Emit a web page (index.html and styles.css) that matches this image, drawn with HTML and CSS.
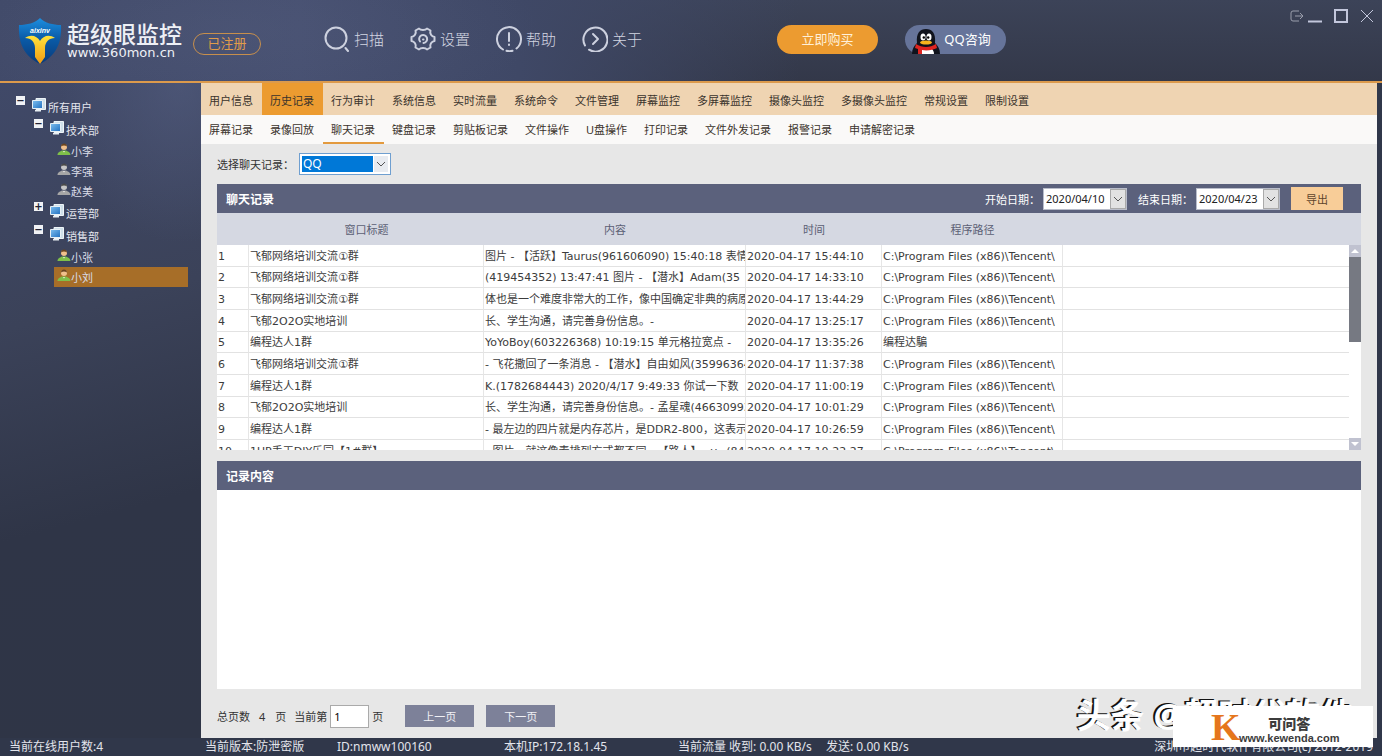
FILE: index.html
```html
<!DOCTYPE html>
<html lang="zh-CN">
<head>
<meta charset="utf-8">
<title>超级眼监控</title>
<link rel="stylesheet" href="styles.css">
</head>
<body>
<svg class="defs" width="0" height="0" aria-hidden="true">
  <defs>
    <linearGradient id="blue" x1="0" y1="0" x2="0" y2="1"><stop offset="0" stop-color="#1d8fe0"/><stop offset="0.45" stop-color="#0a5ba8"/><stop offset="1" stop-color="#0a3a78"/></linearGradient>
    <linearGradient id="gold" x1="0" y1="0" x2="0" y2="1"><stop offset="0" stop-color="#ffe23c"/><stop offset="1" stop-color="#f09a12"/></linearGradient>
    <linearGradient id="screen" x1="0" y1="0" x2="1" y2="1"><stop offset="0" stop-color="#7fc0f0"/><stop offset="1" stop-color="#1f6fc0"/></linearGradient>
    <symbol id="pc" viewBox="0 0 14 14">
      <path d="M4 .5h9.500v11H4z" fill="#cfe0ea" stroke="#eef4f7"/>
      <path d="M.5 2.500h10v8H.5z" fill="url(#screen)" stroke="#e6f0f6"/>
      <path d="M3 12h6v1.500H3z" fill="#e8eef2"/>
    </symbol>
    <symbol id="person" viewBox="0 0 14 13">
      <path d="M.5 12c0-3 3-3.500 4.500-4.500h4c1.500 1 4.500 1.500 4.500 4.500z" fill="currentColor"/>
      <circle cx="7" cy="4" r="3" class="face"/>
      <path d="M4 3.500c0-4 6-4 6 0-2-1.500-4-1.500-6 0z" class="hair"/>
      <path d="M6 8 7 9.500 8 8z" fill="#f2f2ea"/>
    </symbol>
  </defs>
</svg>
<div class="app">
  <header class="top">
    <div class="brand">
      <svg class="shield" viewBox="0 0 44 46" aria-hidden="true">
        <path d="M22 0c5 5 13 7 21 7 1 18-5 31-21 39C6 38 0 25 1 7c8 0 16-2 21-7z" fill="url(#blue)"/>
        <path d="M7 20c6-4 12-2 15 3 3-5 9-7 15-3-6 0-10 4-10 10v9l-5 7-5-7v-9c0-6-4-10-10-10z" fill="url(#gold)"/>
        <text x="22" y="15" text-anchor="middle" class="shield-text">aixinv</text>
      </svg>
      <div class="brand-text">
        <h1>超级眼监控</h1>
        <p>www.360mon.cn</p>
      </div>
      <span class="badge">已注册</span>
    </div>
    <nav class="actions">
      <button class="action"><svg viewBox="0 0 26 26"><circle cx="12" cy="12" r="10.500"/><path d="m21.500 22 2.500 3"/></svg>扫描</button>
      <button class="action"><svg viewBox="0 0 26 26"><path d="M9 2.500c1.500 2 6.500 2 8 0l3.500 2c-1 3 1 6 4 6.500v4c-3 .5-5 3.500-4 6.500l-3.500 2c-1.500-2-6.500-2-8 0l-3.500-2c1-3-1-6-4-6.500v-4c3-.5 5-3.500 4-6.500z"/><path d="M10 15.500a4 4 0 1 1 3.500 1.500"/><path d="M13 13.500h.500"/></svg>设置</button>
      <button class="action"><svg viewBox="0 0 26 26"><path d="M20.500 22.500A12 12 0 1 0 7 23.500"/><path d="M10.500 24.800a12 12 0 0 0 6 0"/><path d="M13 7v8M13 18.500v.5"/></svg>帮助</button>
      <button class="action"><svg viewBox="0 0 26 26"><path d="M3 19.500a12 12 0 1 1 4 4.200"/><path d="m11 8 5 5-5 5"/></svg>关于</button>
    </nav>
    <div class="promo">
      <button class="pill buy">立即购买</button>
      <button class="pill qq">
        <svg viewBox="0 0 30 26" aria-hidden="true">
          <path d="M1 26c0-5 2-8 5-11C5 5 9 1 15 1s10 4 9 14c3 3 5 6 5 11z" fill="#10131c"/>
          <path d="M7 26c0-4 3-7 8-7s8 3 8 7z" fill="#fff"/>
          <ellipse cx="12" cy="9" rx="2.500" ry="3.500" fill="#fff"/><ellipse cx="18" cy="9" rx="2.500" ry="3.500" fill="#fff"/>
          <circle cx="12.800" cy="9.500" r="1.200"/><circle cx="17.200" cy="9.500" r="1.200"/>
          <ellipse cx="15" cy="14.500" rx="6" ry="2" fill="#f8b41c"/>
          <path d="M5 16c6 4 14 4 20 0l1 4c-4 2-10 3-15 2v4H7v-5l-3-1z" fill="#e02420"/>
        </svg>QQ咨询</button>
    </div>
    <div class="window-buttons">
      <button aria-label="退出"><svg viewBox="0 0 14 14"><path class="dim" d="M9 2H3a2 2 0 0 0-2 2v6a2 2 0 0 0 2 2h6M5 7h8M10 4l3 3-3 3"/></svg></button>
      <button aria-label="最小化"><svg viewBox="0 0 14 14"><path d="M0 12.500h14"/></svg></button>
      <button aria-label="最大化"><svg viewBox="0 0 14 14"><path d="M1 1h12v12H1z"/></svg></button>
      <button aria-label="关闭"><svg viewBox="0 0 14 14"><path d="m1 1 12 12M13 1 1 13"/></svg></button>
    </div>
  </header>

  <div class="middle">
    <aside class="side">
      <ul class="tree">
        <li class="group root"><button class="toggle" aria-label="折叠">−</button><svg><use href="#pc"/></svg>所有用户</li>
        <li class="group"><button class="toggle" aria-label="折叠">−</button><svg><use href="#pc"/></svg>技术部</li>
        <li class="leaf"><svg><use href="#person"/></svg>小李</li>
        <li class="leaf off"><svg><use href="#person"/></svg>李强</li>
        <li class="leaf off"><svg><use href="#person"/></svg>赵美</li>
        <li class="group"><button class="toggle" aria-label="展开">+</button><svg><use href="#pc"/></svg>运营部</li>
        <li class="group"><button class="toggle" aria-label="折叠">−</button><svg><use href="#pc"/></svg>销售部</li>
        <li class="leaf"><svg><use href="#person"/></svg>小张</li>
        <li class="leaf selected"><svg><use href="#person"/></svg>小刘</li>
      </ul>
    </aside>

    <main class="main">
      <nav class="tabs">
        <button>用户信息</button><button class="active">历史记录</button><button>行为审计</button><button>系统信息</button><button>实时流量</button><button>系统命令</button><button>文件管理</button><button>屏幕监控</button><button>多屏幕监控</button><button>摄像头监控</button><button>多摄像头监控</button><button>常规设置</button><button>限制设置</button>
      </nav>
      <nav class="tabs sub">
        <button>屏幕记录</button><button>录像回放</button><button class="active">聊天记录</button><button>键盘记录</button><button>剪贴板记录</button><button>文件操作</button><button>U盘操作</button><button>打印记录</button><button>文件外发记录</button><button>报警记录</button><button>申请解密记录</button>
      </nav>
      <div class="content">
        <div class="filter">
          <label for="source">选择聊天记录：</label>
          <span class="combo">
            <select id="source"><option>QQ</option></select>
            <svg viewBox="0 0 14 16" aria-hidden="true"><path d="m3 6 4 4 4-4"/></svg>
          </span>
        </div>

        <section class="panel list">
          <div class="panel-head">
            <h2>聊天记录</h2>
            <label for="from">开始日期：</label>
            <span class="date"><input id="from" value="2020/04/10"><button aria-label="选择开始日期"><svg viewBox="0 0 14 18"><path d="m3 7 4 4 4-4"/></svg></button></span>
            <label for="to" class="next">结束日期：</label>
            <span class="date"><input id="to" value="2020/04/23"><button aria-label="选择结束日期"><svg viewBox="0 0 14 18"><path d="m3 7 4 4 4-4"/></svg></button></span>
            <button class="export">导出</button>
          </div>
          <div class="grid">
            <div class="rows">
              <table>
                <colgroup><col class="c-no"><col class="c-title"><col class="c-text"><col class="c-time"><col class="c-path"><col></colgroup>
                <thead><tr><th></th><th>窗口标题</th><th>内容</th><th>时间</th><th>程序路径</th><th></th></tr></thead>
                <tbody>
                  <tr><td>1</td><td>飞郁网络培训交流①群</td><td>图片 - 【活跃】Taurus(961606090) 15:40:18 表情</td><td>2020-04-17 15:44:10</td><td>C:\Program Files (x86)\Tencent\</td><td></td></tr>
                  <tr><td>2</td><td>飞郁网络培训交流①群</td><td>(419454352) 13:47:41 图片 - 【潜水】Adam(35</td><td>2020-04-17 14:33:10</td><td>C:\Program Files (x86)\Tencent\</td><td></td></tr>
                  <tr><td>3</td><td>飞郁网络培训交流①群</td><td>体也是一个难度非常大的工作，像中国确定非典的病原体</td><td>2020-04-17 13:44:29</td><td>C:\Program Files (x86)\Tencent\</td><td></td></tr>
                  <tr><td>4</td><td>飞郁2O2O实地培训</td><td>长、学生沟通，请完善身份信息。-</td><td>2020-04-17 13:25:17</td><td>C:\Program Files (x86)\Tencent\</td><td></td></tr>
                  <tr><td>5</td><td>编程达人1群</td><td>YoYoBoy(603226368) 10:19:15 单元格拉宽点 -</td><td>2020-04-17 13:35:26</td><td>编程达騙</td><td></td></tr>
                  <tr><td>6</td><td>飞郁网络培训交流①群</td><td>- 飞花撒回了一条消息 - 【潜水】自由如风(35996364</td><td>2020-04-17 11:37:38</td><td>C:\Program Files (x86)\Tencent\</td><td></td></tr>
                  <tr><td>7</td><td>编程达人1群</td><td>K.(1782684443) 2020/4/17 9:49:33 你试一下数</td><td>2020-04-17 11:00:19</td><td>C:\Program Files (x86)\Tencent\</td><td></td></tr>
                  <tr><td>8</td><td>飞郁2O2O实地培训</td><td>长、学生沟通，请完善身份信息。- 孟星魂(46630993</td><td>2020-04-17 10:01:29</td><td>C:\Program Files (x86)\Tencent\</td><td></td></tr>
                  <tr><td>9</td><td>编程达人1群</td><td>- 最左边的四片就是内存芯片，是DDR2-800，这表示频</td><td>2020-04-17 10:26:59</td><td>C:\Program Files (x86)\Tencent\</td><td></td></tr>
                  <tr><td>10</td><td>1UP手工DIY乐园【1#群】</td><td>- 图片 - 就这像素排列方式都不同 - 【路人】=v=(84</td><td>2020-04-17 10:22:27</td><td>C:\Program Files (x86)\Tencent\</td><td></td></tr>
                </tbody>
              </table>
            </div>
            <div class="scroll">
              <button aria-label="向上"><svg viewBox="0 0 12 12"><path d="m2 8 4-4 4 4z"/></svg></button>
              <div class="thumb"></div>
              <button aria-label="向下"><svg viewBox="0 0 12 12"><path d="m2 4 4 4 4-4z"/></svg></button>
            </div>
          </div>
        </section>

        <section class="panel detail">
          <div class="panel-head"><h2>记录内容</h2></div>
          <textarea aria-label="记录内容" readonly></textarea>
        </section>

        <div class="pager">
          <span>总页数</span><span class="count">4</span><span>页</span>
          <label for="page">当前第</label><input id="page" value="1"><span class="unit">页</span>
          <button>上一页</button><button>下一页</button>
        </div>
      </div>
    </main>
  </div>

  <footer class="status">
    <span class="s-online">当前在线用户数:4</span>
    <span class="s-version">当前版本:防泄密版</span>
    <span class="s-id">ID:nmww100160</span>
    <span class="s-ip">本机IP:172.18.1.45</span>
    <span class="s-flow">当前流量 收到: 0.00 KB/s</span>
    <span>发送: 0.00 KB/s</span>
    <span class="s-copy">深圳市超时代软件有限公司(c) 2012-2019</span>
  </footer>

  <div class="watermark">头条 @超时代软件</div>
  <div class="site-mark">
    <span class="k">K</span>
    <span class="site"><b>可问答</b><span>www.kewenda.com</span></span>
  </div>
</div>
</body>
</html>
```

FILE: styles.css
```css
* { box-sizing: border-box; margin: 0; padding: 0; }
body, button, input, select, textarea {
  font-family: "Noto Sans", "Noto Sans CJK SC", sans-serif;
  font-size: 11px;
}
button { border: 0; background: none; color: inherit; white-space: nowrap; }
.defs { position: absolute; }
.app {
  position: relative;
  display: flex;
  flex-direction: column;
  height: 100vh;
  overflow: hidden;
  background: #30374a;
  color: #333;
}

/* header */
.top {
  display: flex;
  align-items: flex-start;
  flex: none;
  height: 83px;
  border-bottom: 2px solid #dc9a4c;
  background:
    radial-gradient(ellipse 300px 90px at 240px 30px, #59638244, transparent),
    linear-gradient(to right, #414a69 0, #464f70 300px, #3f4866 520px, transparent 800px),
    linear-gradient(#3c4358, #333849);
}
.brand { display: flex; width: 324px; padding: 18px 0 0 18px; }
.shield { width: 44px; height: 46px; }
.shield-text { font: italic bold 7px "Liberation Sans", sans-serif; fill: #fff; }
.brand-text { margin-left: 5px; color: #eef0f6; }
.brand-text h1 { font-size: 23px; line-height: 28px; height: 27px; padding-top: 2px; font-weight: 500; }
.brand-text p { font: 13px/16px "DejaVu Sans", sans-serif; }
.badge {
  width: 68px; height: 22px; margin: 15px 0 0 11px;
  border: 1px solid #c78f4c; border-radius: 11px;
  color: #e09c4a; font-size: 13px; line-height: 19px; text-align: center;
}
.actions { display: flex; gap: 26px; width: 453px; padding-top: 26px; }
.action { display: flex; align-items: center; gap: 4px; color: #d3d6e2; font-size: 15px; line-height: 24px; font-weight: 300; padding-bottom: 2px; }
.action svg { width: 26px; height: 26px; fill: none; stroke: #cdd1df; stroke-width: 2; stroke-linecap: round; stroke-linejoin: round; }
.promo { display: flex; gap: 27px; padding-top: 25px; }
.pill { display: flex; align-items: center; justify-content: center; width: 101px; height: 29px; padding-bottom: 2px; border-radius: 15px; font-size: 13px; color: #fff; }
.buy { background: #ec9b30; color: #fff0d8; }
.qq { gap: 3px; background: #66749a; padding-right: 9px; }
.qq svg { width: 30px; height: 26px; margin-top: 5px; }
.window-buttons { display: flex; gap: 12px; margin-left: auto; padding: 9px 8px 0 0; }
.window-buttons svg { display: block; width: 14px; height: 14px; fill: none; stroke: #c3c7dc; stroke-width: 2; }
.window-buttons button:first-child { margin-right: -8px; }
.window-buttons button:last-child svg { stroke-width: 1; }
.window-buttons .dim { stroke: #9a9eac; stroke-width: 1; }

/* side tree */
.middle { display: flex; flex: 1; min-height: 0; padding-right: 5px; }
.side {
  flex: none; width: 201px; padding-top: 12px;
  background:
    radial-gradient(ellipse 120px 160px at 180px 0, #56608388, transparent),
    linear-gradient(165deg, #404968 0, #3b4259 35%, #2f3547 65%, #2f3546 100%);
}
.tree { list-style: none; color: #e4e6ee; }
.tree li { display: flex; align-items: center; }
.group { height: 23px; padding-left: 34px; }
.group.root { padding-left: 16px; }
.group svg { width: 14px; height: 14px; margin: 0 2px 4px 7px; }
.toggle { width: 9px; height: 9px; margin-bottom: 12px; background: #f0f2f5; color: #223; font: bold 10px/8px "DejaVu Sans", sans-serif; text-align: center; }
.leaf { height: 20px; margin: 0 13px 0 54px; padding-left: 3px; color: #d8dbe6; }
.leaf svg { width: 14px; height: 13px; margin-bottom: 3px; color: #7fc04a; }
.face { fill: #f0c08c; }
.hair { fill: #6a4420; }
.leaf.off svg { color: #a3a6ac; --face: #b5b7bb; filter: grayscale(1); }
.selected { background: #a76e28; }

/* tabs */
.main { display: flex; flex-direction: column; flex: 1; min-width: 0; background: #e7e7e7; }
.tabs { display: flex; flex: none; height: 32px; background: #efd4b2; }
.tabs button { height: 100%; padding: 1px 9px 0 8px; color: #3a332c; }
.tabs .active { background: #ec9b30; }
.tabs.sub { height: 29px; background: #faf9f8; }
.tabs.sub button { padding-top: 0; border-bottom: 2px solid transparent; }
.tabs.sub .active { background: none; border-bottom-color: #e39a3e; }

/* content */
.content { display: flex; flex-direction: column; flex: 1; min-height: 0; padding: 0 16px; }
.filter { display: flex; align-items: center; flex: none; gap: 5px; height: 40px; }
.combo { display: flex; width: 92px; height: 22px; padding: 2px; border: 1px solid #6f9fd0; background: #fff; }
.combo select { flex: 1; appearance: none; border: 0; padding-left: 1px; background: #0078d7; color: #fff; font-size: 12px; line-height: 16px; }
.combo svg, .date svg { display: block; width: 14px; height: 18px; fill: none; stroke: #555; }
.combo svg { height: 16px; background: #e8ebf0; margin-left: 1px; }
.panel { display: flex; flex-direction: column; min-height: 0; }
.list { flex: 1 1 266px; margin-bottom: 11px; }
.detail { flex: 1 1 228px; }
.panel-head { display: flex; align-items: center; flex: none; height: 29px; padding: 0 18px 0 9px; background: #5b617c; color: #fff; }
.panel-head h2 { flex: 1; font-size: 12px; font-weight: 700; }
.date { display: flex; width: 84px; height: 22px; margin: 0 0 0 3px; background: #fff; border: 1px solid #b9bdca; }
.date input { flex: 1; min-width: 0; border: 0; padding-left: 2px; color: #222; background: none; }
.date button { width: 16px; border: 1px solid #aaa; background: #e2e2e2; }
.next { margin-left: 11px; }
.export { width: 52px; height: 23px; margin-left: 11px; background: #f8cd98; color: #5f452c; }

.grid { display: flex; flex: 1; min-height: 0; background: #fff; }
.rows { flex: 1; min-width: 0; overflow: hidden; }
table { width: 100%; table-layout: fixed; border-collapse: separate; border-spacing: 0; font-family: "DejaVu Sans", "Noto Sans CJK SC", sans-serif; }
.c-no { width: 32px; } .c-title { width: 235px; } .c-text { width: 262px; } .c-time { width: 136px; } .c-path { width: 181px; }
th { height: 32px; background: #d5d8e2; color: #5c6075; font-weight: 400; }
td {
  height: 22px; line-height: 16px; padding: 2px 0 0 1px; overflow: hidden; white-space: nowrap; color: #3c3c3c;
  border-bottom: 1px solid #e2e2e2; border-right: 1px solid #e6e6e6;
}
tr:nth-child(3n+2) td { height: 21px; }
td:last-child { border-right: 0; }
.scroll { display: flex; flex-direction: column; justify-content: space-between; width: 12px; border-top: 32px solid #d5d8e2; }
.scroll button { flex: none; height: 12px; background: #c0c2d0; }
.scroll svg { display: block; width: 12px; height: 12px; fill: #fff; }
.thumb { height: 85px; margin-bottom: auto; background: #767982; }
.detail textarea { flex: 1; border: 0; background: #fff; resize: none; }

.pager { display: flex; align-items: center; flex: none; height: 49px; padding-top: 5px; }
.count { margin: 0 10px 0 9px; }
.pager label { margin-left: 8px; }
.pager input { width: 39px; height: 23px; margin: 0 3px 0 3px; padding-left: 3px; border: 1px solid #aaa; background: #fff; }
.unit { margin-right: 10px; }
.pager button { width: 69px; height: 22px; margin-left: 12px; background: #7d8199; color: #f0f0f5; }

/* status bar */
.status { display: flex; flex: none; height: 18px; padding: 0 9px; background: #30374a; color: #e3e5ec; font-size: 12px; line-height: 17px; white-space: nowrap; }
.s-online { width: 196px; }
.s-version { width: 132px; }
.s-id { width: 167px; }
.s-ip { width: 174px; }
.s-flow { width: 148px; }
.s-copy { margin-left: auto; }

/* overlays */
.watermark {
  position: absolute; right: 28px; bottom: 21px;
  color: #fff; font-size: 34px; line-height: 40px; font-weight: 700;
  text-shadow: -2px -1px 0 #111;
}
.site-mark { position: absolute; right: 9px; bottom: 9px; display: flex; width: 200px; height: 41px; padding-left: 38px; background: #fff; }
.k { width: 28px; color: #e5761c; font: bold 38px/43px "Liberation Serif", serif; }
.site { display: flex; flex-direction: column; align-items: center; padding-top: 9px; color: #3c3c3c; }
.site b { font-size: 14px; line-height: 18px; font-weight: 900; }
.site span { font: bold 11px/10px "Liberation Sans", sans-serif; }
```
